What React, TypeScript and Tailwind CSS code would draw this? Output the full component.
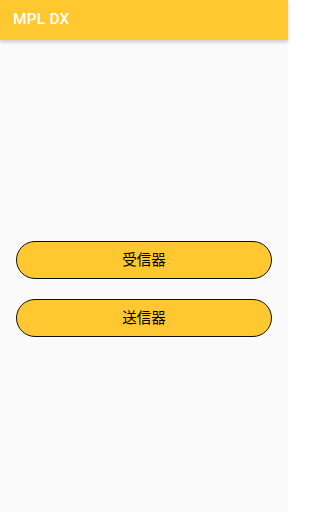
import React from "react";

export default function App() {
  return (
    <div className="w-[288px] h-[512px] bg-[#fafafa] flex flex-col" style={{ fontFamily: "Roboto, 'Noto Sans CJK JP', sans-serif" }}>
      <div className="h-[40px] shrink-0 bg-[#ffc830] flex items-center px-[13px] shadow-[0_2px_4px_rgba(0,0,0,0.2)] relative z-10">
        <span className="text-white font-medium text-[15.5px] tracking-[0.2px]">MPL DX</span>
      </div>
      <div className="flex flex-col px-[16px] gap-[20px] pt-[201px]">
        <button className="h-[38px] w-full rounded-full bg-[#ffc830] border-[1.75px] border-[#111] text-black text-[14.5px] leading-none pt-[2px] flex items-center justify-center">
          受信器
        </button>
        <button className="h-[38px] w-full rounded-full bg-[#ffc830] border-[1.75px] border-[#111] text-black text-[14.5px] leading-none pt-[2px] flex items-center justify-center">
          送信器
        </button>
      </div>
    </div>
  );
}
